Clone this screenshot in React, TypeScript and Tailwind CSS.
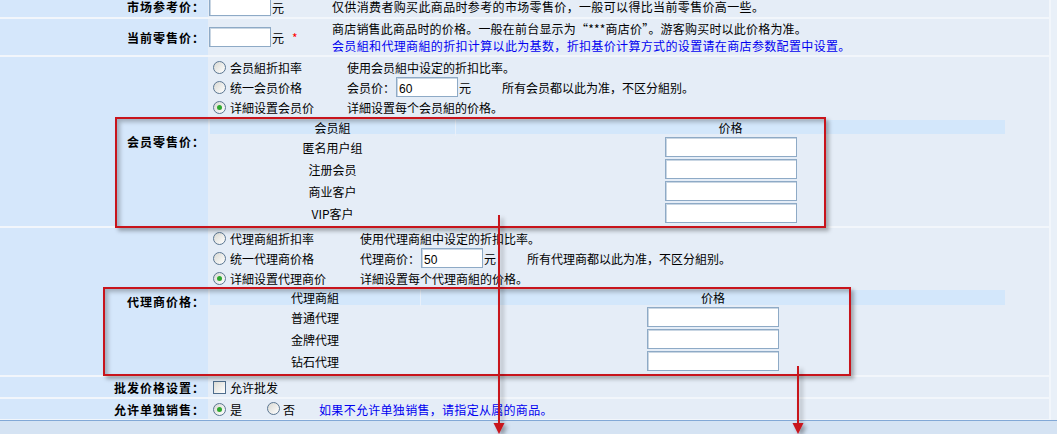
import React from "react";

type RowProps = { label: string; className: string; children: React.ReactNode };

const caption =
  "flex w-[208px] shrink-0 items-center justify-end bg-[#d5e7fb] pr-[3px] font-bold tracking-[1px]";

// one line of the settings table: bold caption on the left, controls on the right
function Row({ label, className, children }: RowProps) {
  return (
    <div className={`flex border-b-2 border-[#f2f6fb] ${className}`}>
      <div className={caption}>{label}</div>
      <div className="flex min-w-0 flex-1 bg-[#e5edf7]">{children}</div>
    </div>
  );
}

function Radio({ checked = false }: { checked?: boolean }) {
  return (
    <span className="relative inline-block h-[13px] w-[13px] shrink-0 rounded-full border border-[#5b7691] bg-linear-to-br from-[#d9d9d3] to-white">
      {checked && (
        <span className="absolute left-[3px] top-[3px] h-[5px] w-[5px] rounded-full bg-[#2ea82e]" />
      )}
    </span>
  );
}

function Checkbox() {
  return (
    <span className="inline-block h-[13px] w-[13px] shrink-0 border border-[#4f6d8c] bg-linear-to-br from-[#dcdcd6] to-white" />
  );
}

function TextBox({ value = "", w = "w-[62px]" }: { value?: string; w?: string }) {
  return (
    <input
      type="text"
      readOnly
      defaultValue={value}
      className={`${w} h-[20px] shrink-0 border border-[#8eaac6] bg-white px-[2px] pt-[3px] font-['Liberation_Sans',sans-serif] text-[12px] leading-[15px] text-black shadow-[inset_1px_1px_0_#c9d6e3] outline-none`}
    />
  );
}

type OptionProps = {
  checked?: boolean;
  label: string;
  labelW: string;
  className: string;
  children: React.ReactNode;
};

function Option({ checked, label, labelW, className, children }: OptionProps) {
  return (
    <div className={`flex items-center pl-[5px] ${className}`}>
      <div className={`flex items-center gap-[4px] ${labelW}`}>
        <Radio checked={checked} />
        <span>{label}</span>
      </div>
      <div className="flex items-center">{children}</div>
    </div>
  );
}

type PriceTableProps = { head: string; rows: string[]; colW: string; headH: string; gap: string };

function PriceTable({ head, rows, colW, headH, gap }: PriceTableProps) {
  return (
    <div className="ml-[2px] w-[795px]">
      <div className={`flex items-center bg-[#d3e7fb] ${headH}`}>
        <div className={`${colW} border-r border-[#e8f0fa] text-center`}>{head}</div>
        <div className="flex-1 text-center">价格</div>
      </div>
      <div className={gap}>
        {rows.map((name) => (
          <div key={name} className="flex h-[22px] items-center">
            <div className={`${colW} border-r border-transparent text-center`}>{name}</div>
            <div className="flex flex-1 justify-center">
              <TextBox w="w-[132px]" />
            </div>
          </div>
        ))}
      </div>
    </div>
  );
}

export default function App() {
  return (
    <div className="relative h-[434px] w-[1057px] overflow-hidden bg-[#e9f0f8] font-['Noto_Sans_CJK_SC',sans-serif] text-[12px] leading-[17px] text-black">
      <div className="-mt-[4px] w-[1051px] border-r-2 border-[#f2f6fb]">
        <Row label="市场参考价：" className="h-[23px]">
          <div className="flex w-[124px] items-end pb-[1px] pl-[1px]">
            <TextBox />
            <span className="ml-[1px]">元</span>
          </div>
          <div className="flex items-center tracking-[0.35px]">
            仅供消费者购买此商品时参考的市场零售价，一般可以得比当前零售价高一些。
          </div>
        </Row>

        <Row label="当前零售价：" className="h-[38px]">
          <div className="flex w-[124px] items-center pl-[1px]">
            <TextBox />
            <span className="ml-[1px]">元</span>
            <span className="ml-[8px] text-[#ff0000]">*</span>
          </div>
          <div className="flex flex-col justify-center tracking-[0.2px]">
            <span>商店销售此商品时的价格。一般在前台显示为“***商店价”。游客购买时以此价格为准。</span>
            <span className="tracking-[0.35px] text-[#0000f0]">
              会员組和代理商組的折扣计算以此为基数，折扣基价计算方式的设置请在商店参数配置中设置。
            </span>
          </div>
        </Row>

        <Row label="会员零售价：" className="h-[171px]">
          <div className="flex flex-col">
            <Option label="会员組折扣率" labelW="w-[134px]" className="h-[20px]">
              使用会员組中设定的折扣比率。
            </Option>
            <Option label="统一会员价格" labelW="w-[134px]" className="h-[20px]">
              <span>会员价：</span>
              <span className="ml-[1px]">
                <TextBox value="60" />
              </span>
              <span className="ml-[1px] w-[43px]">元</span>
              <span>所有会员都以此为准，不区分組别。</span>
            </Option>
            <Option checked label="详細设置会员价" labelW="w-[134px]" className="h-[21px]">
              详細设置每个会员組的价格。
            </Option>
            <div className="mt-[2px]">
              <PriceTable
                head="会员組"
                rows={["匿名用户组", "注册会员", "商业客户", "VIP客户"]}
                colW="w-[246px]"
                headH="h-[14px]"
                gap="pt-[2px]"
              />
            </div>
          </div>
        </Row>

        <Row label="代理商价格：" className="h-[149px]">
          <div className="flex flex-col">
            <Option label="代理商組折扣率" labelW="w-[147px]" className="h-[20px]">
              使用代理商組中设定的折扣比率。
            </Option>
            <Option label="统一代理商价格" labelW="w-[147px]" className="h-[20px]">
              <span>代理商价：</span>
              <span className="ml-[1px]">
                <TextBox value="50" />
              </span>
              <span className="ml-[1px] w-[43px]">元</span>
              <span>所有代理商都以此为准，不区分組别。</span>
            </Option>
            <Option checked label="详細设置代理商价" labelW="w-[147px]" className="h-[21px]">
              详細设置每个代理商組的价格。
            </Option>
            <div className="mt-[1px]">
              <PriceTable
                head="代理商組"
                rows={["普通代理", "金牌代理", "钻石代理"]}
                colW="w-[211px]"
                headH="h-[15px]"
                gap="pt-[1px]"
              />
            </div>
          </div>
        </Row>

        <Row label="批发价格设置：" className="h-[22px]">
          <div className="flex items-center gap-[4px] pl-[5px]">
            <Checkbox />
            <span>允许批发</span>
          </div>
        </Row>

        <div className="flex h-[21px] border-b border-[#f2f6fb]">
          <div className={caption}>允许单独销售：</div>
          <div className="flex flex-1 items-center bg-[#e5edf7] pl-[5px]">
            <Radio checked />
            <span className="ml-[4px]">是</span>
            <span className="ml-[25px]">
              <Radio />
            </span>
            <span className="ml-[3px]">否</span>
            <span className="ml-[24px] tracking-[0.3px] text-[#0000f0]">
              如果不允许单独销售，请指定从属的商品。
            </span>
          </div>
        </div>
      </div>

      {/* footer strip under the form */}
      <div className="h-[20px] border-t border-[#82a8d6] bg-[#d5e3f3]" />

      {/* red callout frames */}
      <div className="pointer-events-none absolute left-[115px] top-[117px] h-[111px] w-[711px] border-2 border-[#c8141c] shadow-[3px_3px_4px_rgba(0,0,0,0.3),inset_3px_3px_4px_rgba(0,0,0,0.25)]" />
      <div className="pointer-events-none absolute left-[103px] top-[287px] h-[89px] w-[748px] border-2 border-[#c8141c] shadow-[3px_3px_4px_rgba(0,0,0,0.3),inset_3px_3px_4px_rgba(0,0,0,0.25)]" />

      {/* callout arrows */}
      <svg
        className="pointer-events-none absolute left-0 top-0"
        width="1057"
        height="434"
        viewBox="0 0 1057 434"
      >
        <defs>
          <filter id="arrowShadow" x="-200%" y="-10%" width="500%" height="130%">
            <feDropShadow dx="3" dy="3" stdDeviation="2" floodColor="#000" floodOpacity="0.35" />
          </filter>
        </defs>
        <g filter="url(#arrowShadow)" fill="#c8141c" stroke="#c8141c">
          <line x1="499" y1="215" x2="499" y2="426" strokeWidth="2" />
          <polygon points="493.5,423 504.5,423 499,434" stroke="none" />
          <line x1="798" y1="366" x2="798" y2="426" strokeWidth="2" />
          <polygon points="792.5,423 803.5,423 798,434" stroke="none" />
        </g>
      </svg>
    </div>
  );
}
